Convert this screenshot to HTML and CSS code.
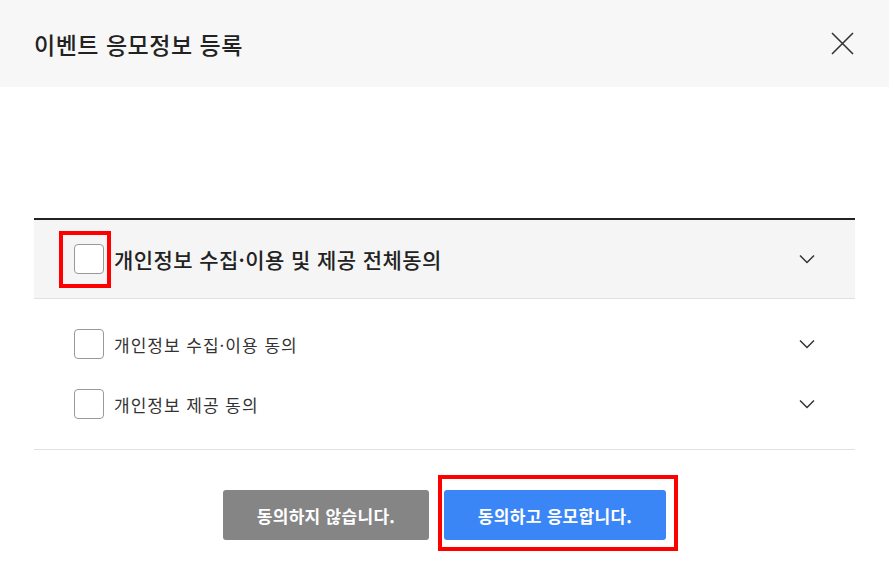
FILE: index.html
```html
<!DOCTYPE html>
<html lang="ko">
<head>
    <meta charset="UTF-8">
    <title>이벤트 응모정보 등록</title>
    <link rel="stylesheet" href="styles.css">
</head>
<body>
    <div class="modal">
        <!-- Header -->
        <div class="modal-header">
            <h2>이벤트 응모정보 등록</h2>
            <button class="close-btn" aria-label="닫기">
                <svg width="23" height="23" viewBox="0 0 23 23"><path d="M1 1L22 22M22 1L1 22" stroke="#333" stroke-width="1.6" fill="none"/></svg>
            </button>
        </div>

        <div class="modal-body">
            <!-- Agreement -->
            <div class="agree-box">
                <div class="agree-all">
                    <span class="check"></span>
                    <span class="label">개인정보 수집·이용 및 제공 전체동의</span>
                    <svg class="chev" width="16" height="10" viewBox="0 0 16 10"><path d="M1 1.5L8 8.5L15 1.5" stroke="#333" stroke-width="1.5" fill="none"/></svg>
                    <span class="mark mark-check"></span>
                </div>
                <div class="agree-list">
                    <div class="agree-item">
                        <span class="check"></span>
                        <span class="label">개인정보 수집·이용 동의</span>
                        <svg class="chev" width="16" height="10" viewBox="0 0 16 10"><path d="M1 1.5L8 8.5L15 1.5" stroke="#333" stroke-width="1.5" fill="none"/></svg>
                    </div>
                    <div class="agree-item">
                        <span class="check"></span>
                        <span class="label">개인정보 제공 동의</span>
                        <svg class="chev" width="16" height="10" viewBox="0 0 16 10"><path d="M1 1.5L8 8.5L15 1.5" stroke="#333" stroke-width="1.5" fill="none"/></svg>
                    </div>
                </div>
            </div>

            <!-- Buttons -->
            <div class="btn-row">
                <button class="btn btn-no">동의하지 않습니다.</button>
                <div class="btn-wrap">
                    <button class="btn btn-yes">동의하고 응모합니다.</button>
                    <span class="mark mark-btn"></span>
                </div>
            </div>
        </div>
    </div>
</body>
</html>
```

FILE: styles.css
```css
body, html {
    margin: 0;
    padding: 0;
    background-color: #ffffff;
    font-family: "Noto Sans CJK KR", "Noto Sans", sans-serif;
    color: #222;
}

.modal {
    width: 889px;
    height: 572px;
    overflow: hidden;
}

.modal-header {
    height: 87px;
    background-color: #f7f7f7;
    display: flex;
    align-items: center;
    justify-content: space-between;
    padding: 0 35px 0 34px;
}

.modal-header h2 {
    margin: 0;
    font-size: 23px;
    font-weight: 500;
    color: #222;
    letter-spacing: 0.5px;
}

.close-btn {
    background: none;
    border: none;
    padding: 0;
    display: flex;
    cursor: pointer;
}

.modal-body {
    padding: 131px 34px 0;
}

.agree-box {
    border-top: 2px solid #222;
    border-bottom: 1px solid #e1e1e1;
}

.agree-all {
    position: relative;
    height: 78px;
    background-color: #f5f5f5;
    border-bottom: 1px solid #e1e1e1;
    display: flex;
    align-items: center;
    padding: 0 40px 0 40px;
}

.agree-all .label {
    font-size: 21px;
    font-weight: 500;
    color: #222;
    letter-spacing: 0.4px;
}

.agree-list {
    padding: 15px 0;
}

.agree-item {
    height: 60px;
    display: flex;
    align-items: center;
    padding: 0 40px 0 40px;
}

.agree-item .label {
    font-size: 17px;
    color: #333;
    letter-spacing: 1px;
}

.check {
    width: 28px;
    height: 28px;
    border: 1px solid #999;
    border-radius: 4px;
    background-color: #fff;
    margin-right: 10px;
    flex-shrink: 0;
}

.chev {
    margin-left: auto;
}

.btn-row {
    display: flex;
    justify-content: center;
    gap: 15px;
    padding-top: 40px;
}

.btn {
    height: 50px;
    border: none;
    border-radius: 3px;
    color: #fff;
    font-family: inherit;
    font-size: 17px;
    font-weight: 700;
    letter-spacing: 0.3px;
    cursor: pointer;
}

.btn-no {
    width: 206px;
    background-color: #858585;
}

.btn-wrap {
    position: relative;
    display: flex;
}

.btn-yes {
    width: 222px;
    background-color: #3a86f6;
}

/* red highlight marks */
.mark {
    position: absolute;
    border: 4px solid #ff0000;
    pointer-events: none;
}

.mark-check {
    left: 25px;
    top: 11px;
    width: 44px;
    height: 49px;
}

.mark-btn {
    left: -6px;
    top: -15px;
    width: 232px;
    height: 68px;
}
```
